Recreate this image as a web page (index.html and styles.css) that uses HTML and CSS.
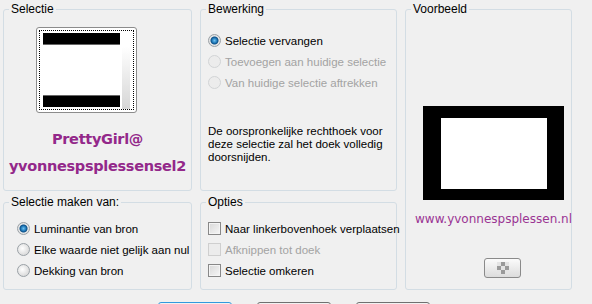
FILE: index.html
```html
<!DOCTYPE html>
<html>
  <head>
    <meta charset="utf-8">
    <title>Selectie</title>
    <link rel="stylesheet" href="styles.css">
  </head>
  <body>
    <div id="dialog">
      <div class="panels">
        <fieldset class="group selectie">
          <legend>Selectie</legend>
          <div class="thumb">
            <div class="thumb-inner">
              <div class="bar"></div>
              <div class="bar"></div>
              <div class="scroll"></div>
            </div>
          </div>
          <div class="sig">PrettyGirl@<br>yvonnespsplessensel2</div>
        </fieldset>

        <fieldset class="group bewerking">
          <legend>Bewerking</legend>
          <div class="body">
            <div class="row"><span class="radio on"></span>Selectie vervangen</div>
            <div class="row off"><span class="radio"></span>Toevoegen aan huidige selectie</div>
            <div class="row off"><span class="radio"></span>Van huidige selectie aftrekken</div>
            <p class="note">De oorspronkelijke rechthoek voor deze selectie zal het doek volledig doorsnijden.</p>
          </div>
        </fieldset>

        <fieldset class="group voorbeeld">
          <legend>Voorbeeld</legend>
          <div class="body">
            <div class="preview"><div></div></div>
            <div class="url">www.yvonnespsplessen.nl</div>
            <div class="bg-btn"><span></span></div>
          </div>
        </fieldset>

        <fieldset class="group maken">
          <legend>Selectie maken van:</legend>
          <div class="body">
            <div class="row"><span class="radio on"></span>Luminantie van bron</div>
            <div class="row"><span class="radio"></span>Elke waarde niet gelijk aan nul</div>
            <div class="row"><span class="radio"></span>Dekking van bron</div>
          </div>
        </fieldset>

        <fieldset class="group opties">
          <legend>Opties</legend>
          <div class="body">
            <div class="row"><span class="check"></span>Naar linkerbovenhoek verplaatsen</div>
            <div class="row off"><span class="check"></span>Afknippen tot doek</div>
            <div class="row"><span class="check"></span>Selectie omkeren</div>
          </div>
        </fieldset>
      </div>

      <div class="buttons">
        <div class="btn default"></div>
        <div class="btn"></div>
        <div class="btn"></div>
      </div>
    </div>
  </body>
</html>
```

FILE: styles.css
```css
* {
  margin:0;
  padding:0;
  box-sizing: border-box;
}
html, body {
  background: #f0f0f0;
  overflow: hidden;
}
body {
  font-family: "Liberation Sans", Arial, sans-serif;
  font-size: 11px;
  color: #000;
}

#dialog {
  width: 592px;
  height: 304px;
  padding: 2px 0 0 3px;
  overflow: hidden;
}

.panels {
  display: grid;
  grid-template-columns: 189px 197px 167px;
  grid-template-rows: 189px 95px;
  column-gap: 8px;
  row-gap: 4px;
}

.group {
  border: 1px solid #d3dde4;
  border-radius: 3px;
  min-width: 0;
}
.group legend {
  margin-left: 5px;
  padding: 0 2px;
  line-height: 14px;
  font-size: 12px;
}

.voorbeeld {
  grid-column: 3;
  grid-row: 1 / 3;
}
.voorbeeld .body { padding-left: 17px; }
.maken { grid-column: 1; grid-row: 2; }
.maken .body { padding: 9px 0 0 13px; }
.opties { grid-column: 2; grid-row: 2; }
.opties .body { padding: 9px 0 0 7px; }
.bewerking .body { padding: 14px 0 0 7px; }

/* radio / checkbox rows */
.row {
  display: flex;
  align-items: center;
  gap: 4px;
  height: 21px;
  white-space: nowrap;
  font-size: 11.5px;
}
.row.off {
  color: #a3a3a3;
}
.radio {
  width: 13px;
  height: 13px;
  border-radius: 50%;
  border: 1px solid #9aa1a6;
  background: radial-gradient(circle at 40% 40%, #ffffff 0, #e6e6e6 50%, #cfcfcf 100%);
  flex: none;
}
.radio.on {
  background: radial-gradient(circle at 50% 50%, #6fc2f0 0, #1f78b8 2.5px, #0c4f86 3.5px, #e8e8e8 4.5px, #d0d0d0 100%);
}
.off .radio {
  border-color: #d2d4d6;
  background: #ececec;
}
.check {
  width: 13px;
  height: 13px;
  border: 1px solid #888;
  background: linear-gradient(135deg, #d8d8d8, #f6f6f6);
  box-shadow: inset 0 0 0 1px #f4f4f4;
  flex: none;
}
.off .check {
  border-color: #cfcfcf;
  background: #ececec;
  box-shadow: none;
}

.note {
  margin-top: 32px;
  line-height: 13px;
  width: 185px;
  font-size: 11.5px;
}

/* selection thumbnail */
.thumb {
  margin: 11px 0 0 32px;
  width: 101px;
  height: 86px;
  border: 1px solid #8b8b8b;
  border-radius: 3px;
  background: #fff;
  padding: 2px;
}
.thumb-inner {
  position: relative;
  height: 100%;
  border: 1px dotted #000;
  display: flex;
  flex-direction: column;
  justify-content: space-between;
  padding: 2px 13px 2px 3px;
}
.thumb .bar {
  height: 12px;
  background: #000;
  border-bottom: 1px solid #666;
}
.thumb .bar + .bar {
  border-bottom: none;
  border-top: 1px solid #666;
}
.thumb .scroll {
  position: absolute;
  top: 0;
  bottom: 0;
  right: 3px;
  width: 8px;
  background: linear-gradient(#fff 20%, #d6d6d6);
}

.sig {
  margin-top: 13px;
  text-align: center;
  font-family: "DejaVu Sans", sans-serif;
  font-weight: bold;
  font-size: 14.5px;
  line-height: 27px;
  color: #93288a;
  letter-spacing: -0.3px;
}

/* preview */
.preview {
  margin-top: 90px;
  width: 141px;
  height: 94px;
  background: #000;
  padding: 12px 17px 11px 18px;
}
.preview div {
  height: 100%;
  background: #fff;
}
.url {
  margin: 12px 0 0 -8px;
  font-family: "DejaVu Sans", sans-serif;
  font-size: 12px;
  line-height: 14px;
  color: #9a3493;
  white-space: nowrap;
}
.bg-btn {
  margin: 32px 0 0 61px;
  width: 37px;
  height: 20px;
  border: 1px solid #8a8a8a;
  border-radius: 3px;
  background: linear-gradient(#fbfbfb, #dcdcdc);
  display: flex;
  align-items: center;
  justify-content: center;
}
.bg-btn span {
  width: 12px;
  height: 12px;
  background: conic-gradient(#9a9a9a 25%, #e4e4e4 0 50%, #9a9a9a 0 75%, #e4e4e4 0) 0 0 / 8px 8px;
}

/* dialog buttons, cut off at the bottom */
.buttons {
  display: flex;
  gap: 25px;
  margin-top: 12px;
  padding-left: 155px;
}
.btn {
  width: 74px;
  height: 23px;
  border: 1px solid #707070;
  border-radius: 3px;
  background: linear-gradient(#f2f2f2, #dddddd);
}
.btn.default {
  border-color: #3399dd;
}
```
